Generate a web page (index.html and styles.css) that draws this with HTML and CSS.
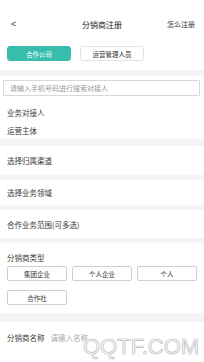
FILE: index.html
```html
<!DOCTYPE html>
<html lang="zh">
<head>
<meta charset="utf-8">
<link rel="stylesheet" href="styles.css">
</head>
<body>
<div class="page">
  <header class="topbar">
    <span class="back">&lt;</span>
    <span class="title">分销商注册</span>
    <span class="help">怎么注册</span>
  </header>
  <div class="tabs">
    <div class="tab active">合作公司</div>
    <div class="tab">运营管理人员</div>
  </div>
  <div class="gap g6"></div>
  <section class="block search">
    <div class="input">请输入手机号码进行搜索对接人</div>
    <div class="line l1">业务对接人</div>
    <div class="line l2">运营主体</div>
  </section>
  <div class="gap g7"></div>
  <section class="row r1">选择归属渠道</section>
  <div class="gap g5"></div>
  <section class="row r2">选择业务领域</section>
  <div class="gap g5"></div>
  <section class="row r3">合作业务范围(可多选)</section>
  <div class="gap g5"></div>
  <section class="block types">
    <div class="label">分销商类型</div>
    <div class="opts">
      <div class="opt">集团企业</div>
      <div class="opt">个人企业</div>
      <div class="opt">个人</div>
      <div class="opt">合作社</div>
    </div>
  </section>
  <div class="gap g9"></div>
  <section class="name">
    <span class="nlabel">分销商名称</span>
    <span class="nph">请输入名称</span>
  </section>
  <div class="watermark">QQTF.COM</div>
</div>
</body>
</html>
```
FILE: styles.css
```css
* { box-sizing: border-box; }
html, body { margin: 0; padding: 0; background: #fff; }
body {
  width: 204px;
  height: 362px;
  overflow: hidden;
  font-family: "Noto Sans CJK SC", "Noto Sans", sans-serif;
  font-size: 7.5px;
  color: #3a3a3a;
}
.page { position: relative; width: 204px; height: 362px; }
.topbar {
  height: 33px;
  padding: 15px 9px 0 9px;
  display: flex;
  align-items: center;
  position: relative;
}
.back { font-family: "Liberation Sans", sans-serif; font-size: 9px; color: #333; padding-left: 2px; }
.title {
  position: absolute;
  left: 0; right: 0; top: 15px; height: 18px;
  display: flex; align-items: center; justify-content: center;
  font-size: 8px; color: #222;
}
.help { margin-left: auto; font-size: 7px; color: #333; }
.tabs {
  display: flex;
  gap: 9px;
  padding: 13px 0 0 7px;
  height: 37px;
}
.tab {
  width: 64px; height: 15px;
  border-radius: 3px;
  border: 1px solid #e4e4e4;
  display: flex; align-items: center; justify-content: center;
  font-size: 6.5px; color: #333;
}
.tab.active { background: #37bdae; border-color: #37bdae; color: #fff; }
.gap { background: #f4f4f4; }
.g5 { height: 5px; }
.g6 { height: 6px; }
.g7 { height: 7px; }
.g9 { height: 9px; }
.search { height: 63px; padding-top: 4px; }
.input {
  margin: 0 4px 0 3px;
  height: 16px;
  border: 1px solid #d8d8d8;
  border-radius: 1px;
  padding-left: 6px;
  display: flex; align-items: center;
  color: #999; font-size: 7px;
}
.line { padding-left: 7px; height: 18px; display: flex; align-items: center; }
.l1 { margin-top: 7px; }
.row {
  padding-left: 7px;
  display: flex; align-items: center;
}
.r1 { height: 29px; }
.r2 { height: 25px; }
.r3 { height: 28px; }
.types { height: 70px; padding: 7px 7px 0 7px; }
.label { height: 14px; display: flex; align-items: center; }
.opts {
  margin-top: 2px;
  display: grid;
  grid-template-columns: repeat(3, 60px);
  column-gap: 5px;
  row-gap: 9px;
}
.opt {
  height: 15px;
  border: 1px solid #cfcfcf;
  border-radius: 2px;
  display: flex; align-items: center; justify-content: center;
  font-size: 6.5px; color: #333;
}
.name {
  height: 30px;
  padding-left: 7px;
  display: flex; align-items: center;
  gap: 6px;
}
.nph { color: #aaa; }
.watermark {
  position: absolute;
  left: 83px; top: 334px;
  font-family: "Liberation Sans", sans-serif;
  font-size: 22px;
  color: #fff;
  -webkit-text-stroke: 0.7px #b8b8b8;
}
```
